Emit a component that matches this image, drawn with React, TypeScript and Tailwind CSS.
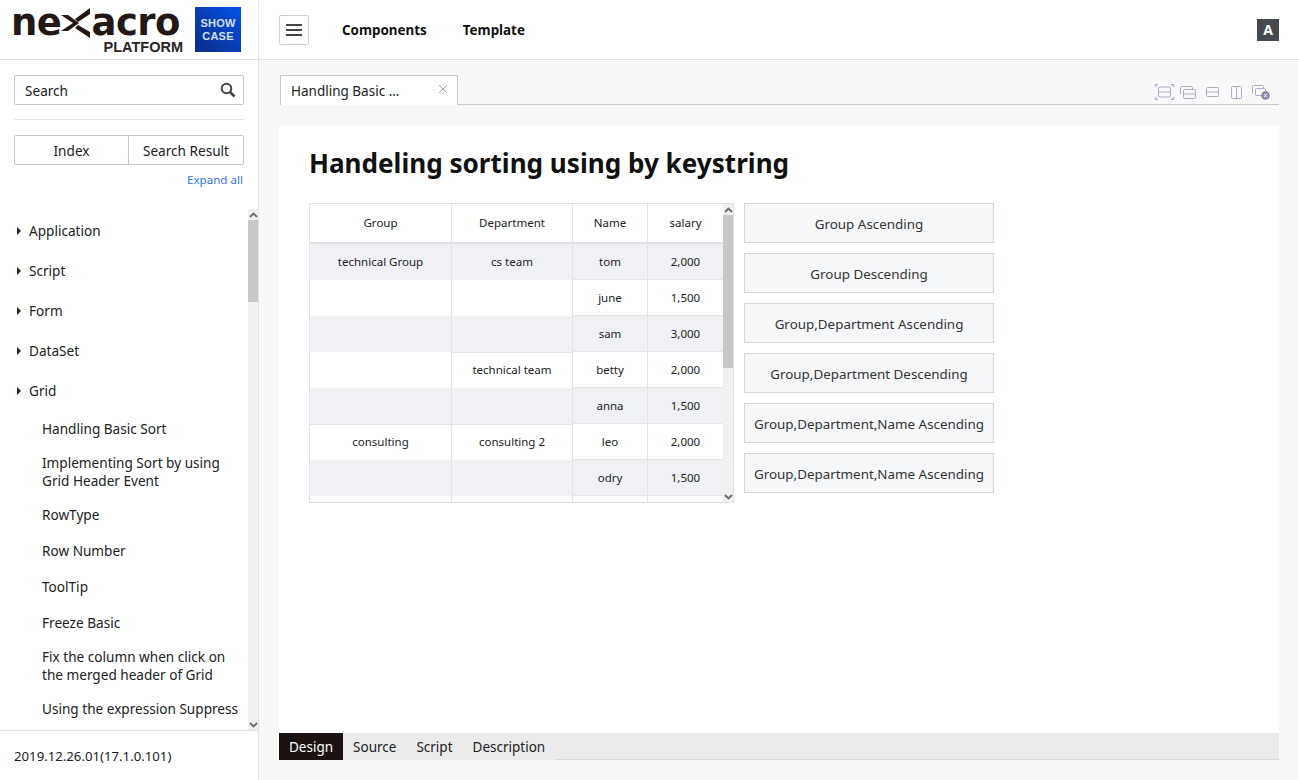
import { X } from "lucide-react";

const FONT = "font-['Noto_Sans','Open_Sans',sans-serif]";

const TOP_ITEMS = ["Application", "Script", "Form", "DataSet", "Grid"];

const GRID_ITEMS = [
  ["Handling Basic Sort"],
  ["Implementing Sort by using", "Grid Header Event"],
  ["RowType"],
  ["Row Number"],
  ["ToolTip"],
  ["Freeze Basic"],
  ["Fix the column when click on", "the merged header of Grid"],
  ["Using the expression Suppress"],
];

const ROWS = [
  { group: "technical Group", dept: "cs team", name: "tom", salary: "2,000", groupTop: false, deptTop: false },
  { group: "", dept: "", name: "june", salary: "1,500", groupTop: false, deptTop: false },
  { group: "", dept: "", name: "sam", salary: "3,000", groupTop: false, deptTop: false },
  { group: "", dept: "technical team", name: "betty", salary: "2,000", groupTop: false, deptTop: true },
  { group: "", dept: "", name: "anna", salary: "1,500", groupTop: false, deptTop: false },
  { group: "consulting", dept: "consulting 2", name: "leo", salary: "2,000", groupTop: true, deptTop: true },
  { group: "", dept: "", name: "odry", salary: "1,500", groupTop: false, deptTop: false },
];

const SORT_BUTTONS = [
  "Group Ascending",
  "Group Descending",
  "Group,Department Ascending",
  "Group,Department Descending",
  "Group,Department,Name Ascending",
  "Group,Department,Name Ascending",
];

function Caret({ up }: { up?: boolean }) {
  return (
    <svg width="9" height="6" viewBox="0 0 9 6" className={up ? "" : "rotate-180"}>
      <path d="M1 5 L4.5 1.5 L8 5" fill="none" stroke="#6b6b6b" strokeWidth="1.8" />
    </svg>
  );
}

function Scrollbar({ thumbTop, thumbHeight }: { thumbTop: number; thumbHeight: number }) {
  return (
    <div className="flex h-full w-[10px] shrink-0 flex-col bg-[#f0f0f0]">
      <div className="flex h-[11px] shrink-0 items-center justify-center">
        <Caret up />
      </div>
      <div className="relative flex-1">
        <div className="absolute left-0 w-full bg-[#c8c8c8]" style={{ top: thumbTop, height: thumbHeight }} />
      </div>
      <div className="flex h-[11px] shrink-0 items-center justify-center">
        <Caret />
      </div>
    </div>
  );
}

function Logo() {
  return (
    <div className="flex h-[59px] items-start pl-[11px] pt-[7px]">
      <div className="relative h-[46px] w-[173px]">
        <div className="flex h-[32px] items-center font-['DejaVu_Sans',sans-serif] text-[37px] font-bold leading-[32px] tracking-[-0.5px] text-[#231815]">
          <span>ne</span>
          <svg width="34" height="32" viewBox="0 0 34 32" className="mx-[-2px] shrink-0">
            <path d="M2 8 L14 16 L2 24 L9 24 L20 16 L9 8 Z" fill="#231815" />
            <path d="M31 1 L16 12 L19 15 L31 7 Z M19 18 L16 21 L31 31 L31 25 Z" fill="#231815" />
          </svg>
          <span>acro</span>
        </div>
        <div className="absolute right-[1px] top-[33px] font-['Liberation_Sans',sans-serif] text-[14.5px] font-bold leading-[15px] text-[#2b2523]">
          PLATFORM
        </div>
      </div>
      <div className="ml-[11px] flex h-[45px] w-[46px] flex-col items-center justify-center bg-gradient-to-tr from-[#0a2c85] to-[#0052ea] font-['Liberation_Sans',sans-serif] text-[11px] font-bold leading-[13px] tracking-[0.2px] text-[#d3e1f5]">
        <span>SHOW</span>
        <span>CASE</span>
      </div>
    </div>
  );
}

function Sidebar() {
  return (
    <aside className="flex h-full w-[259px] shrink-0 flex-col border-r border-[#e4e4e4] bg-white">
      <div className="border-b border-[#e4e4e4]">
        <Logo />
      </div>
      <div className="px-[14px] pt-[15px]">
        <div className="flex h-[30px] w-[230px] items-center justify-between rounded-[2px] border border-[#c8c8c8] pl-[10px] pr-[7px] text-[13.6px] text-[#222]">
          <span className="pt-[2px]">Search</span>
          <svg width="16" height="16" viewBox="0 0 16 16" fill="none" stroke="#444">
            <circle cx="6.5" cy="6.5" r="4.8" strokeWidth="2" />
            <path d="M10 10L14.5 14.5" strokeWidth="2.6" />
          </svg>
        </div>
        <div className="mt-[14px] h-px w-[230px] bg-[#e4e4e4]" />
        <div className="mt-[15px] flex h-[30px] w-[230px] rounded-[2px] border border-[#c8c8c8] text-[13.6px] text-[#222]">
          <div className="flex w-[114px] items-center justify-center border-r border-[#c8c8c8] pt-[2px]">Index</div>
          <div className="flex flex-1 items-center justify-center pt-[2px]">Search Result</div>
        </div>
        <div className="mt-[6px] w-[229px] text-right text-[11.6px] leading-[18px] text-[#2f74f0]">Expand all</div>
      </div>
      <div className="mt-[20px] flex h-[522px] min-h-0">
        <div className="flex-1 overflow-hidden pt-[2px]">
          {TOP_ITEMS.map((item) => (
            <div key={item} className="flex h-[40px] items-center pl-[17px] text-[13.6px] text-[#222]">
              <span className="mr-[8px] h-0 w-0 border-y-[4px] border-l-[4px] border-y-transparent border-l-[#222]" />
              {item}
            </div>
          ))}
          {GRID_ITEMS.map((lines) => (
            <div
              key={lines[0]}
              className={`flex flex-col justify-center pl-[42px] text-[13.6px] leading-[18px] text-[#222] ${lines.length > 1 ? "py-[7px]" : "py-[9px]"}`}
            >
              {lines.map((line) => (
                <span key={line} className="whitespace-nowrap">{line}</span>
              ))}
            </div>
          ))}
        </div>
        <Scrollbar thumbTop={0} thumbHeight={82} />
      </div>
      <div className="flex h-[50px] items-center border-t border-[#e4e4e4] pl-[14px] pt-[2px] text-[13.2px] text-[#222]">
        2019.12.26.01(17.1.0.101)
      </div>
    </aside>
  );
}

function Header() {
  return (
    <header className="flex h-[60px] shrink-0 items-center border-b border-[#e4e4e4] bg-white pl-[20px] pr-[19px]">
      <div className="flex h-[30px] w-[30px] items-center justify-center rounded-[2px] border border-[#cfcfcf]">
        <svg width="16" height="14" viewBox="0 0 16 14" stroke="#444" strokeWidth="2">
          <path d="M0 2H16M0 7H16M0 12H16" />
        </svg>
      </div>
      <div className="ml-[33px] pt-[1px] text-[13.4px] font-bold text-[#111]">Components</div>
      <div className="ml-[36px] pt-[1px] text-[13.4px] font-bold text-[#111]">Template</div>
      <div className="ml-auto flex h-[22px] w-[22px] items-center justify-center bg-[#464a4f] text-[14px] font-bold text-white">
        A
      </div>
    </header>
  );
}

function WindowIcons() {
  const stroke = "#a9aec4";
  return (
    <div className="mb-[4px] ml-auto flex items-center pr-[9px]">
      <svg width="19" height="16" viewBox="0 0 19 16" fill="none" stroke={stroke}>
        <path d="M0.5 3V0.5H3M16 0.5H18.5V3M0.5 13V15.5H3M18.5 13V15.5H16" strokeWidth="1.4" />
        <rect x="3.5" y="3" width="12" height="10" rx="1" />
        <path d="M3.5 8H15.5" />
      </svg>
      <svg width="16" height="13" viewBox="0 0 16 13" fill="none" stroke={stroke} className="ml-[6px]">
        <path d="M0.5 8.5V1.5a1 1 0 0 1 1-1h10a1 1 0 0 1 1 1v2" />
        <rect x="3.5" y="3.5" width="12" height="9" rx="1" />
        <path d="M3.5 8H15.5" />
      </svg>
      <svg width="13" height="10" viewBox="0 0 13 10" fill="none" stroke={stroke} className="ml-[10px]">
        <rect x="0.5" y="0.5" width="12" height="9" rx="1" />
        <path d="M0.5 5H12.5" />
      </svg>
      <svg width="11" height="13" viewBox="0 0 11 13" fill="none" stroke={stroke} className="ml-[12px]">
        <rect x="0.5" y="0.5" width="10" height="12" rx="1" />
        <path d="M5.5 0.5V12.5" />
      </svg>
      <svg width="18" height="15" viewBox="0 0 18 15" fill="none" stroke={stroke} className="ml-[10px]">
        <path d="M0.5 8.5V1.5a1 1 0 0 1 1-1h9a1 1 0 0 1 1 1v2" />
        <rect x="3.5" y="3.5" width="10" height="7" rx="1" />
        <circle cx="13.5" cy="10.5" r="4.4" fill="#8a8ea6" stroke="none" />
        <path d="M12 9L15 12M15 9L12 12" stroke="#fff" strokeWidth="1" />
      </svg>
    </div>
  );
}

function DataGrid() {
  return (
    <div className="flex h-[300px] w-[425px] shrink-0 border border-[#e2e2e2] text-[11.5px] text-[#222]">
      <div className="w-[413px] overflow-hidden">
        <div className="flex h-[40px] border-b-2 border-[#e2e2e2]">
          <div className="flex w-[142px] items-center justify-center border-r border-[#e4e4e4]">Group</div>
          <div className="flex w-[121px] items-center justify-center border-r border-[#e4e4e4]">Department</div>
          <div className="flex w-[75px] items-center justify-center border-r border-[#e4e4e4]">Name</div>
          <div className="flex w-[75px] items-center justify-center">salary</div>
        </div>
        {ROWS.map((row, i) => {
          const stripe = i % 2 === 0 ? "bg-[#f0f1f5]" : "bg-white";
          return (
            <div key={row.name} className={`flex h-[36px] ${stripe}`}>
              <div className={`flex w-[142px] items-center justify-center border-r border-[#e4e4e4] ${row.groupTop ? "border-t border-t-[#e4e4e4] pb-[1px]" : ""}`}>
                {row.group}
              </div>
              <div className={`flex w-[121px] items-center justify-center border-r border-[#e4e4e4] ${row.deptTop ? "border-t border-t-[#e4e4e4] pb-[1px]" : ""}`}>
                {row.dept}
              </div>
              <div className="flex w-[75px] items-center justify-center border-b border-r border-[#e4e4e4]">{row.name}</div>
              <div className="flex w-[75px] items-center justify-center border-b border-[#e4e4e4]">{row.salary}</div>
            </div>
          );
        })}
        <div className="flex h-[8px]">
          <div className="w-[142px] border-r border-[#e4e4e4]" />
          <div className="w-[121px] border-r border-[#e4e4e4]" />
          <div className="w-[75px] border-r border-[#e4e4e4]" />
        </div>
      </div>
      <Scrollbar thumbTop={0} thumbHeight={153} />
    </div>
  );
}

export default function App() {
  return (
    <div className={`flex h-[780px] w-[1298px] overflow-hidden bg-[#f8f8f8] ${FONT}`}>
      <Sidebar />
      <div className="flex min-w-0 flex-1 flex-col">
        <Header />
        <div className="flex h-[45px] shrink-0 items-end pl-[21px] pr-[19px] pt-[15px]">
          <div className="flex w-full items-end border-b border-[#c8c8c8]">
            <div className="mb-[-1px] flex h-[30px] w-[178px] items-center justify-between border border-b-0 border-[#c8c8c8] bg-white pl-[10px] pr-[7px] text-[13.5px] text-[#222]">
              <span className="pt-[1px]">Handling Basic ...</span>
              <X size={14} strokeWidth={1.6} className="mb-[3px] text-[#999]" />
            </div>
            <WindowIcons />
          </div>
        </div>
        <div className="ml-[20px] mr-[19px] mt-[20px] h-[608px] shrink-0 bg-white px-[30px] pt-[18px]">
          <h1 className="text-[26.1px] font-bold leading-[40px] text-[#111]">Handeling sorting using by keystring</h1>
          <div className="mt-[20px] flex gap-[10px]">
            <DataGrid />
            <div className="flex w-[250px] flex-col gap-[10px]">
              {SORT_BUTTONS.map((label, i) => (
                <div key={i} className="flex h-[40px] items-center justify-center whitespace-nowrap border border-[#d4d6dc] bg-[#f6f7f9] pt-[2px] text-[13.4px] text-[#333]">
                  {label}
                </div>
              ))}
            </div>
          </div>
        </div>
        <div className="ml-[20px] mr-[19px] flex h-[27px] shrink-0 items-stretch border-b border-[#d8d8d8] text-[13.5px] text-[#222]">
          <div className="mb-[-1px] flex items-center bg-[#1a1311] px-[10px] pt-[1px] text-white">Design</div>
          <div className="mb-[-1px] flex items-center bg-[#ebebeb] px-[10px] pt-[1px]">Source</div>
          <div className="mb-[-1px] flex items-center bg-[#ebebeb] px-[10px] pt-[1px]">Script</div>
          <div className="mb-[-1px] flex items-center bg-[#ebebeb] px-[10px] pt-[1px]">Description</div>
          <div className="flex-1 bg-[#ebebeb]" />
        </div>
      </div>
    </div>
  );
}
